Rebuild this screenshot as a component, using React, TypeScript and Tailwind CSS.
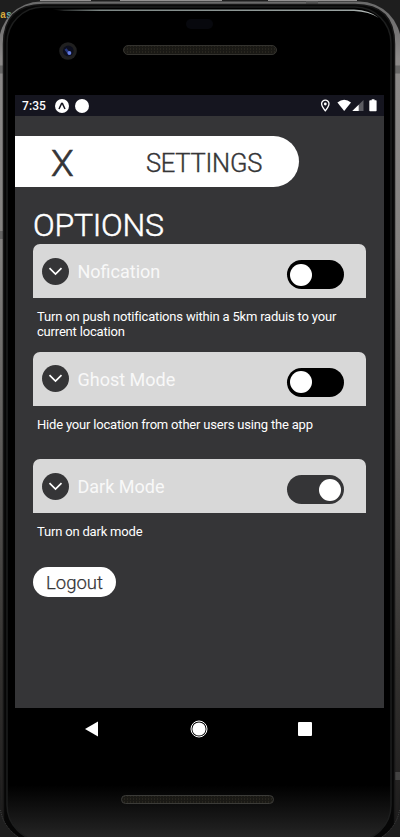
import React, { useState } from "react";

function Frame() {
  return (
    <svg className="absolute inset-0" width="400" height="837" viewBox="0 0 400 837" fill="none" aria-hidden="true">
      <defs>
        <linearGradient id="metal" x1="0" y1="0" x2="0" y2="837" gradientUnits="userSpaceOnUse">
          <stop offset="0" stopColor="#6a6a6a" />
          <stop offset="0.04" stopColor="#777676" />
          <stop offset="0.07" stopColor="#8c8a89" />
          <stop offset="0.3" stopColor="#83817f" />
          <stop offset="0.55" stopColor="#5a5856" />
          <stop offset="0.8" stopColor="#33312f" />
          <stop offset="1" stopColor="#1c1b1b" />
        </linearGradient>
        <linearGradient id="chin" x1="0" y1="785" x2="0" y2="837" gradientUnits="userSpaceOnUse">
          <stop offset="0" stopColor="#000000" />
          <stop offset="1" stopColor="#242424" />
        </linearGradient>
        <linearGradient id="shine" x1="50" y1="0" x2="382" y2="0" gradientUnits="userSpaceOnUse">
          <stop offset="0" stopColor="#8a9492" stopOpacity="0" />
          <stop offset="0.15" stopColor="#7c8684" />
          <stop offset="0.9" stopColor="#9aa3a1" />
          <stop offset="1" stopColor="#c4c8c7" />
        </linearGradient>
        <pattern id="mesh" width="3" height="3" patternUnits="userSpaceOnUse">
          <rect width="3" height="3" fill="#1a1915" />
          <rect x="1" width="1" height="2" fill="#27251e" />
        </pattern>
      </defs>
      <rect width="400" height="837" fill="#1e1e1e" />
      <text x="0" y="18" fontFamily="'Liberation Mono', monospace" fontSize="10" fontWeight="bold" fill="#d9a93c">
        a<tspan fill="#6fb5a8">s</tspan>
      </text>
      <rect x="-1" y="1.5" width="402" height="850" rx="42" fill="url(#metal)" />
      <path d="M40 0.5H91M120 0.5H222M268 0.5H357" stroke="#939191" />
      <path d="M0 65.5h4v8H0zM395 65.5h5v8h-5zM0 231h4v8H0zM395 772h5v8h-5z" fill="#555555" fillOpacity=".65" />
      <path d="M306 1h12v3h-12z" fill="#555" />
      <path d="M3.5 850V44Q3.5 4.5 43 4.5H355Q394.5 4.5 394.5 44V850Z" fill="#060606" stroke="#171717" strokeWidth="1.5" />
      <rect x="7" y="7" width="384" height="834" rx="36" fill="url(#chin)" stroke="#1d1e1e" strokeWidth="1.5" />
      <path d="M0 776V837H19Q4 828 1.5 812Z" fill="#1e1e1e" />
      <path d="M400 790V837H381Q396 828 398.5 812Z" fill="#1e1e1e" />
      <path d="M.5 810Q3 826 18 837M399.5 810Q397 826 382 837" stroke="#4a4a4a" strokeWidth=".8" strokeDasharray="1 1" />
      <path d="M52 9.5H354Q370 10 379 18Q369 11.5 354 11H64Z" fill="url(#shine)" />
      <rect x="186" y="19" width="27" height="10" rx="5" fill="#07080d" />
      <circle cx="68" cy="51" r="8.8" fill="#202020" />
      <circle cx="68.3" cy="51" r="5.4" fill="#0c0e1d" />
      <path d="M65.5 49l4 5" stroke="#26387f" strokeWidth="2.5" />
      <circle cx="69.4" cy="53" r="1.9" fill="#637be0" />
      <rect x="123.5" y="45.5" width="153" height="9" rx="4.5" fill="url(#mesh)" stroke="#34332f" />
      <rect x="121.5" y="795.5" width="152" height="8" rx="4" fill="url(#mesh)" stroke="#3b3b38" />
    </svg>
  );
}

function StatusBar() {
  return (
    <header className="flex h-[21px] items-center bg-[#15151f] pl-[7px] pr-[7px] text-white">
      <span className="w-[33px] pt-px text-[12px] font-medium leading-[20px] tracking-[0.1px]">7:35</span>
      <svg width="36" height="14" viewBox="0 0 36 14">
        <circle cx="7" cy="7" r="7" fill="#fff" />
        <path d="M4 10L6.5 4.6Q7 4 7.5 4.6L10 10" fill="none" stroke="#15151f" strokeWidth="1.5" />
        <circle cx="27" cy="7" r="7" fill="#fff" />
      </svg>
      <svg width="58" height="14" viewBox="0 0 58 14" className="ml-auto">
        <path d="M6.3 1.2C4.2 1.2 2.6 2.8 2.6 4.8C2.6 7.4 6.3 11.8 6.3 11.8S10 7.4 10 4.8C10 2.8 8.4 1.2 6.3 1.2Z" fill="none" stroke="#fff" strokeWidth="1.3" />
        <circle cx="6.3" cy="5" r="1.4" fill="#fff" />
        <path d="M18.4 3.5Q25.2 -1.8 32 3.5L25.2 12Z" fill="#fff" />
        <path d="M44.5 1V12H33.3Z" fill="#5d5d63" />
        <path d="M39.7 5.7V12H33.3Z" fill="#fff" />
        <path d="M51.2 1.3H52.7V.3H55.5V1.3H57Q57.6 1.3 57.6 2V11.5Q57.6 12.2 57 12.2H51Q50.3 12.2 50.3 11.5V2Q50.3 1.3 51.2 1.3Z" fill="#fff" />
      </svg>
    </header>
  );
}

function Toggle({ initial, track }: { initial: boolean; track: string }) {
  const [on, setOn] = useState(initial);
  return (
    <button
      role="switch"
      aria-checked={on}
      onClick={() => setOn(!on)}
      className={`mt-[7px] flex h-[29px] w-[57.5px] items-center rounded-full px-[3px] ${track} ${on ? "justify-end" : "justify-start"}`}
    >
      <span className="size-[22px] rounded-full bg-white" />
    </button>
  );
}

type OptionProps = { title: string; text: string; initial: boolean; track: string };

function Option({ title, text, initial, track }: OptionProps) {
  return (
    <section className="h-[107.7px]">
      <div className="flex h-[54px] items-center rounded-t-[7px] bg-[#d8d8d8] pl-[8.5px] pr-[22px]">
        <svg width="27" height="27" viewBox="0 0 27 27">
          <circle cx="13.5" cy="13.5" r="13.5" fill="#353537" />
          <path d="M7.5 10.2L13.5 16.1L19.5 10.2" fill="none" stroke="#fff" strokeWidth="1.7" />
        </svg>
        <h2 className="ml-[9px] grow pt-[2px] text-[18px] leading-[24px] text-[#f8f8f8]">{title}</h2>
        <Toggle initial={initial} track={track} />
      </div>
      <p className="whitespace-pre-line pl-[4px] pt-[11px] text-[13px] leading-[15px] tracking-[-0.19px] text-white">{text}</p>
    </section>
  );
}

export default function App() {
  return (
    <div className="relative h-[837px] w-[400px] overflow-hidden font-['Roboto',sans-serif]">
      <Frame />
      <div className="relative flex h-full flex-col pl-[15px] pr-[16px] pt-[95px]">
        <StatusBar />
        <main className="h-[592px] bg-[#353537] pt-[20px]">
          <div className="flex h-[51px] w-[284px] items-center rounded-r-full bg-white text-[#353537]">
            <button className="ml-[36px] w-[95px] pt-[4px] text-left text-[37px] font-light leading-[47px] [-webkit-text-stroke:0.7px_#353537]">X</button>
            <h1 className="pt-[4px] text-[25.5px] font-light leading-[47px] tracking-[-0.25px] [-webkit-text-stroke:0.4px_#353537]">SETTINGS</h1>
          </div>
          <div className="pl-[18px] pr-[18px] pt-[19px]">
            <h2 className="h-[38px] text-[32px] font-light leading-[38px] tracking-[-0.25px] text-white [-webkit-text-stroke:0.5px_white]">OPTIONS</h2>
            <Option title="Nofication" text={"Turn on push notifications within a 5km raduis to your\ncurrent location"} initial={false} track="bg-black" />
            <Option title="Ghost Mode" text="Hide your location from other users using the app" initial={false} track="bg-black" />
            <Option title="Dark Mode" text="Turn on dark mode" initial={true} track="bg-[#353537]" />
            <button className="h-[30px] w-[83px] rounded-full bg-white pt-[2px] text-[18.5px] font-light leading-[28px] text-[#353537] [-webkit-text-stroke:0.25px_#353537]">Logout</button>
          </div>
        </main>
        <nav className="flex h-[42px] items-center pl-[70px]">
          <svg width="14" height="16" viewBox="0 0 14 16"><path d="M0 8L13 .5V15.5Z" fill="#fff" /></svg>
          <svg width="18" height="18" viewBox="0 0 18 18" className="ml-[91px]">
            <circle cx="9" cy="9" r="8" fill="none" stroke="#fff" strokeWidth="1" />
            <circle cx="9" cy="9" r="6.6" fill="#fff" />
          </svg>
          <span className="ml-[90px] size-[14px] rounded-[1px] bg-white" />
        </nav>
      </div>
    </div>
  );
}
